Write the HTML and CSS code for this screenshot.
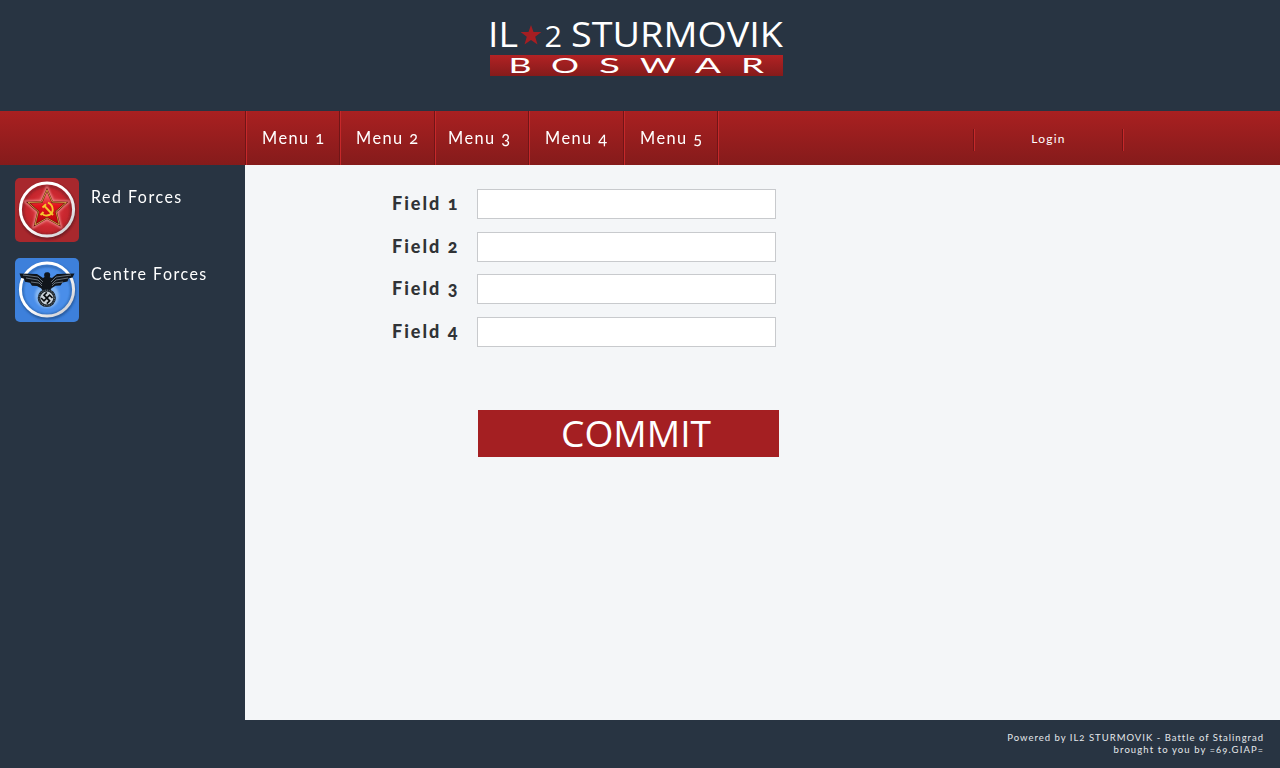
FILE: index.html
```html
<!DOCTYPE html>
<html lang="en">
<head>
<meta charset="utf-8">
<title>IL-2 Sturmovik BOSWAR</title>
<link rel="stylesheet" href="styles.css">
</head>
<body>
<header class="header">
  <svg class="logo" width="296" height="60" viewBox="0 0 296 60">
    <defs><linearGradient id="band" x1="0" y1="0" x2="0" y2="1"><stop offset="0" stop-color="#b22224"/><stop offset="1" stop-color="#851b1b"/></linearGradient></defs>
    <text class="logo-title" x="-2" y="30.500" textLength="30" lengthAdjust="spacingAndGlyphs">IL</text>
    <path fill="#a51e22" d="M41 9l2.500 7h7.900l-6.200 4.800 2.300 7.700-6.500-4.600-6.500 4.600 2.300-7.700-6.200-4.800h7.900z"/>
    <text class="logo-two" x="54.500" y="30.500" textLength="17.500" lengthAdjust="spacingAndGlyphs">2</text>
    <text class="logo-title" x="81" y="30.500" textLength="212" lengthAdjust="spacingAndGlyphs">STURMOVIK</text>
    <rect x="0" y="39" width="293" height="21" fill="url(#band)"/>
    <g class="logo-sub">
      <text x="18.500" y="57.300" textLength="23" lengthAdjust="spacingAndGlyphs">B</text>
      <text x="61" y="57.300" textLength="28" lengthAdjust="spacingAndGlyphs">O</text>
      <text x="109" y="57.300" textLength="21" lengthAdjust="spacingAndGlyphs">S</text>
      <text x="150" y="57.300" textLength="36" lengthAdjust="spacingAndGlyphs">W</text>
      <text x="205" y="57.300" textLength="26" lengthAdjust="spacingAndGlyphs">A</text>
      <text x="251" y="57.300" textLength="23" lengthAdjust="spacingAndGlyphs">R</text>
    </g>
  </svg>
</header>
<nav class="nav">
  <div class="menu">
    <a class="item"><span class="item-text">Menu 1</span></a><a class="item"><span class="item-text">Menu 2</span></a><a class="item item-three"><span class="item-text">Menu 3</span></a><a class="item"><span class="item-text">Menu 4</span></a><a class="item"><span class="item-text">Menu 5</span></a>
  </div>
  <a class="login">Login</a>
</nav>
<div class="middle">
  <aside class="sidebar">
    <div class="force">
      <svg class="badge" width="64" height="64" viewBox="0 0 64 64">
        <defs>
          <radialGradient id="red" cx=".5" cy=".5" r=".5"><stop offset="0" stop-color="#f26065"/><stop offset=".65" stop-color="#cb2830"/><stop offset="1" stop-color="#b9242a"/></radialGradient>
          <linearGradient id="star" x1="0" y1="0" x2="0" y2="1"><stop offset="0" stop-color="#f68a90"/><stop offset=".45" stop-color="#e2141c"/><stop offset="1" stop-color="#b40008"/></linearGradient>
          <linearGradient id="ring" x1="0" y1="0" x2="1" y2="1"><stop offset=".5" stop-color="#fff"/><stop offset="1" stop-color="#c4c4c8"/></linearGradient>
          <filter id="soft" x="-20%" y="-20%" width="140%" height="140%"><feGaussianBlur stdDeviation="1.300"/></filter>
        </defs>
        <rect width="64" height="64" rx="5" fill="#a8282d"/>
        <circle cx="32.500" cy="33" r="27" fill="none" stroke="#6d1d22" stroke-width="3" filter="url(#soft)"/>
        <circle cx="32" cy="31.500" r="26.500" fill="url(#red)"/>
        <circle cx="32" cy="32.500" r="24.500" fill="none" stroke="#85242a" stroke-width="2" filter="url(#soft)"/>
        <circle cx="32" cy="31.500" r="26.600" fill="none" stroke="url(#ring)" stroke-width="3"/>
        <path d="M32 12l5.300 12 14 .5-10.300 9 3.300 13.500-12.300-7-12 7 3.300-13.500-10.300-9 13.700-.5z" fill="none" stroke="#ef8b8d" stroke-width="4" filter="url(#soft)"/>
        <path d="M32 12l5.300 12 14 .5-10.300 9 3.300 13.500-12.300-7-12 7 3.300-13.500-10.300-9 13.700-.5z" fill="url(#star)" stroke="#64150c" stroke-width="1.800"/>
        <path d="M32 12l5.300 12 14 .5-10.300 9 3.300 13.500-12.300-7-12 7 3.300-13.500-10.300-9 13.700-.5z" fill="none" stroke="#d8a64a" stroke-width=".9"/>
        <path d="M33 24.500c6 3 7 12-1 13-2 .3-4-.6-5-2M28.500 34l-3 3M27.500 29.500l3.500-3.300M29.500 28l8.500 9" fill="none" stroke="#f5c72e" stroke-width="1.900"/>
      </svg>
      <span class="force-name">Red Forces</span>
    </div>
    <div class="force">
      <svg class="badge" width="64" height="64" viewBox="0 0 64 64">
        <rect width="64" height="64" rx="5" fill="#3d80db"/>
        <circle cx="32.500" cy="33" r="27" fill="none" stroke="#25599b" stroke-width="3" filter="url(#soft)"/>
        <circle cx="32" cy="31.500" r="26.500" fill="#4a8ee9"/>
        <circle cx="32" cy="32.500" r="24.500" fill="none" stroke="#2b62aa" stroke-width="2" filter="url(#soft)"/>
        <circle cx="32" cy="31.500" r="26.600" fill="none" stroke="url(#ring)" stroke-width="3"/>
        <circle cx="32" cy="38" r="12" fill="#9cc6f5" opacity=".7" filter="url(#soft)"/>
        <path d="M4.500 15.500l17.500.5 6 4 1.500-1c-1-3 0-5 3-4.800 2.500 0 3.300 2.300 2.300 5L37 20l5-4 17.500-.5-2 4-4 1-1 3-5 1-2 3-5 .2-4 2.600L35 33h-7l-2-2.700-4-2.400-5-.2-2-3-5-1-1-3-3-1z" fill="#10151b"/>
        <path d="M8 17l15 2 5 5M11 20l12 2 4 4M16 24l8 1 3 3M56 17l-15 2-5 5M53 20l-12 2-4 4M48 24l-8 1-3 3" fill="none" stroke="#7b8793" stroke-width=".8"/>
        <circle cx="31.800" cy="40" r="7.800" fill="#c9d1d7" stroke="#1c252c" stroke-width="2.600"/>
        <circle cx="31.800" cy="40" r="7.800" fill="none" stroke="#87919a" stroke-width=".8" stroke-dasharray="1 1.300"/>
        <path transform="rotate(45 31.800 40)" d="M27.800 36v4h8v4M35.800 36h-4v8h-4" fill="none" stroke="#080b0e" stroke-width="1.600"/>
      </svg>
      <span class="force-name">Centre Forces</span>
    </div>
  </aside>
  <main class="content">
    <form class="form">
      <label class="label" for="f1">Field 1</label><input class="input" id="f1">
      <label class="label" for="f2">Field 2</label><input class="input" id="f2">
      <label class="label" for="f3">Field 3</label><input class="input" id="f3">
      <label class="label" for="f4">Field 4</label><input class="input" id="f4">
    </form>
    <button class="commit" type="button"><svg width="151" height="47" viewBox="0 0 151 47"><text x="-1" y="36.500" textLength="150" lengthAdjust="spacingAndGlyphs">COMMIT</text></svg></button>
  </main>
</div>
<footer class="footer"><span class="credit-one">Powered by IL2 STURMOVIK - Battle of Stalingrad</span><span class="credit-two">brought to you by =69.GIAP=</span></footer>
</body>
</html>
```
FILE: styles.css
```css
* { box-sizing: border-box; }
body { margin: 0; height: 768px; overflow: hidden; display: flex; flex-direction: column; background: #283442; color: #fff; font-family: Lato, "Open Sans", sans-serif; font-variant-numeric: oldstyle-nums; }
.header { height: 111px; padding: 16px 0 0 490px; }
.logo { display: block; overflow: visible; fill: #fff; }
.logo-title { font: 35px "Open Sans", sans-serif; }
.logo-two { font: 29px "Open Sans", sans-serif; }
.logo-sub { font: 22px Lato, sans-serif; }
.nav { height: 54px; display: flex; padding-left: 245px; background: linear-gradient(#a92021, #851b1b); }
.menu { display: flex; width: 474px; border-right: 1px solid #c6282a; box-shadow: inset -1px 0 #701517; }
.item { flex: none; width: 94.4px; padding: 15px 0 0 16px; border-left: 1px solid #701517; box-shadow: inset 1px 0 #c6282a; font-size: 18px; line-height: 22px; letter-spacing: 1.6px; white-space: nowrap; }
.item-text { display: inline-block; transform: scaleX(.91); transform-origin: 0 50%; }
.item-three { padding-left: 13px; }
.login { width: 151px; height: 22px; margin: 18px 0 0 254px; border-left: 1px solid #701517; border-right: 1px solid #c6282a; box-shadow: inset 1px 0 #c6282a, inset -1px 0 #701517; text-align: center; font-size: 12px; line-height: 20px; letter-spacing: 1.2px; }
.middle { display: flex; height: 555px; }
.sidebar { width: 245px; padding: 13px 0 0 15px; display: flex; flex-direction: column; gap: 16px; }
.force { display: flex; gap: 12px; height: 64px; }
.badge { flex: none; }
.force-name { padding-top: 8px; font-size: 17px; line-height: 22px; letter-spacing: 1.6px; white-space: nowrap; transform: scaleX(.94); transform-origin: 0 50%; }
.force + .force .force-name { padding-top: 5px; }
.content { flex: 1; padding: 24px 0 0 147px; background: #f4f6f8; }
.form { display: grid; grid-template-columns: 85px 299px; grid-auto-rows: 30px; row-gap: 12.67px; }
.label { font-size: 18px; font-weight: 900; line-height: 28px; letter-spacing: 2px; color: #303336; white-space: nowrap; }
.input { width: 299px; height: 30px; border: 1px solid #c8cacd; background: #fff; padding: 0 6px; border-radius: 0; }
.commit { display: block; width: 301px; height: 47px; margin: 63px 0 0 86px; padding: 0 0 0 84px; border: 0; background: #a41f22; text-align: left; }
.commit svg { display: block; overflow: visible; fill: #fff; font: 36px "Open Sans", sans-serif; }
.footer { height: 48px; padding: 12px 16px 0 0; display: flex; flex-direction: column; align-items: flex-end; font-size: 9.5px; line-height: 12px; color: #e5e8eb; }
.credit-one { letter-spacing: 1px; }
.credit-two { letter-spacing: 1.1px; }
```
